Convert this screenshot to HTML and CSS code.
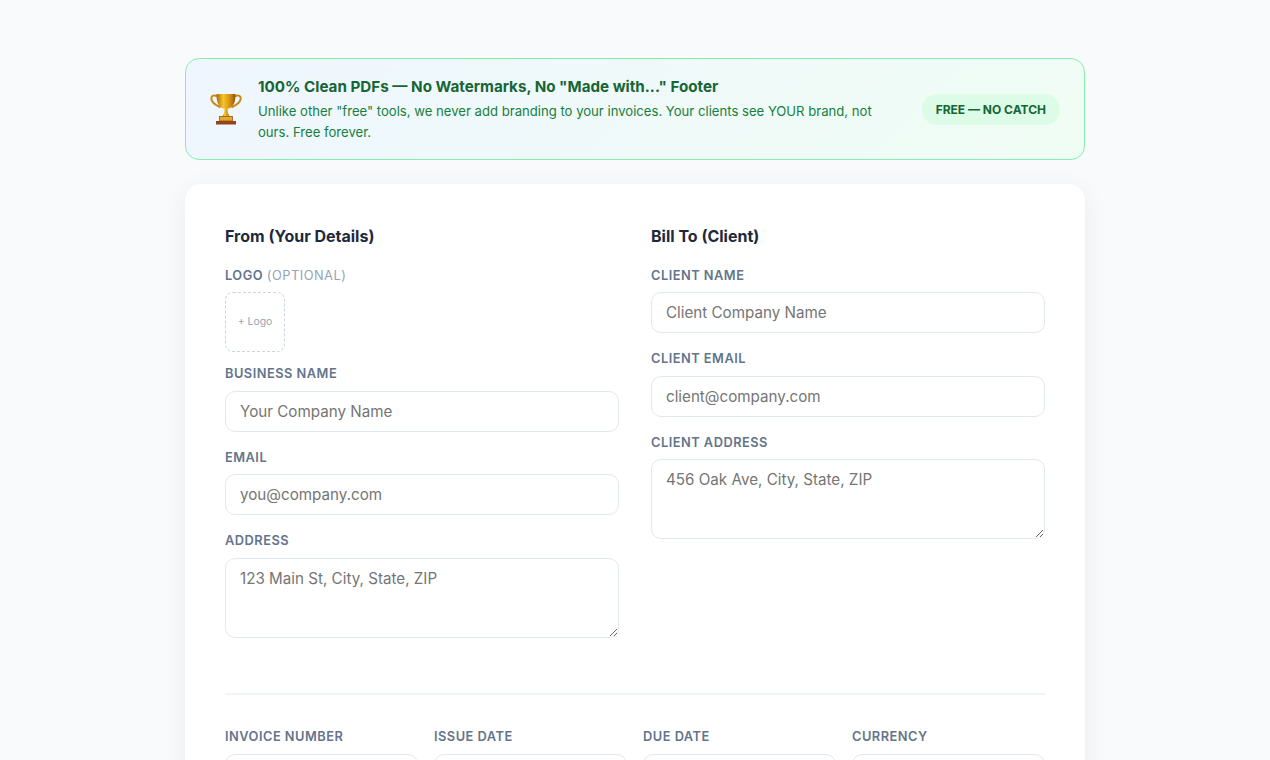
FILE: index.html
```html
<!DOCTYPE html>
<html lang="en">
<head>
<meta charset="utf-8">
<title>Invoice Generator</title>
<link rel="stylesheet" href="styles.css">
</head>
<body>
<main class="container">
  <section class="banner">
    <svg class="trophy" width="32" height="32" viewBox="0 0 32 32" aria-hidden="true">
      <defs>
        <linearGradient id="gold" x1="0" y1="0" x2="1" y2="0">
          <stop offset="0" stop-color="#a9690a"/>
          <stop offset="0.35" stop-color="#f6c52f"/>
          <stop offset="0.7" stop-color="#d8920f"/>
          <stop offset="1" stop-color="#8c5307"/>
        </linearGradient>
      </defs>
      <path d="M7.500 3.500C4 1.500 1.300 2.500 1.300 5.500C1.300 10 6 12 10.500 14.500" fill="none" stroke="#c98a14" stroke-width="2"/>
      <path d="M24.500 3.500C28 1.500 30.700 2.500 30.700 5.500C30.700 10 26 12 21.500 14.500" fill="none" stroke="#c98a14" stroke-width="2"/>
      <path d="M6.500 1H25.500C25.500 9 24 13 19 15.500H13C8 13 6.500 9 6.500 1Z" fill="url(#gold)"/>
      <path d="M14.500 15H17.500C17.500 20 18.500 22 20.500 24H11.500C13.500 22 14.500 20 14.500 15Z" fill="url(#gold)"/>
      <rect x="9.500" y="23.500" width="13" height="4.500" fill="#e2a92c" stroke="#9a5a1c" stroke-width="0.8"/>
      <rect x="6" y="28" width="20" height="3.500" fill="#94431a"/>
    </svg>
    <div class="banner-text">
      <h2 class="banner-title">100% Clean PDFs — No Watermarks, No "Made with..." Footer</h2>
      <p class="banner-desc">Unlike other "free" tools, we never add branding to your invoices. Your clients see YOUR brand, not ours. Free forever.</p>
    </div>
    <span class="badge">FREE — NO CATCH</span>
  </section>

  <section class="card">
    <div class="parties">
      <div class="party">
        <h3 class="party-title">From (Your Details)</h3>
        <div class="field field-logo">
          <label class="label">Logo <span class="optional">(optional)</span></label>
          <div class="logo-box">+ Logo</div>
        </div>
        <div class="field">
          <label class="label" for="biz">Business Name</label>
          <input class="input" id="biz" placeholder="Your Company Name">
        </div>
        <div class="field">
          <label class="label" for="email">Email</label>
          <input class="input" id="email" placeholder="you@company.com">
        </div>
        <div class="field">
          <label class="label" for="addr">Address</label>
          <textarea class="input area" id="addr" placeholder="123 Main St, City, State, ZIP"></textarea>
        </div>
      </div>
      <div class="party">
        <h3 class="party-title">Bill To (Client)</h3>
        <div class="field">
          <label class="label" for="cname">Client Name</label>
          <input class="input" id="cname" placeholder="Client Company Name">
        </div>
        <div class="field">
          <label class="label" for="cemail">Client Email</label>
          <input class="input" id="cemail" placeholder="client@company.com">
        </div>
        <div class="field">
          <label class="label" for="caddr">Client Address</label>
          <textarea class="input area" id="caddr" placeholder="456 Oak Ave, City, State, ZIP"></textarea>
        </div>
      </div>
    </div>
    <hr class="divider">
    <div class="meta">
      <div class="field">
        <label class="label" for="num">Invoice Number</label>
        <input class="input" id="num">
      </div>
      <div class="field">
        <label class="label" for="issue">Issue Date</label>
        <input class="input" id="issue">
      </div>
      <div class="field">
        <label class="label" for="due">Due Date</label>
        <input class="input" id="due">
      </div>
      <div class="field">
        <label class="label" for="cur">Currency</label>
        <input class="input" id="cur">
      </div>
    </div>
  </section>
</main>
</body>
</html>
```
FILE: styles.css
```css
* { box-sizing: border-box; }
html, body { margin: 0; padding: 0; }
html { height: 760px; overflow: hidden; }
body {
  background: #f8fafc;
  font-family: "Inter", "Liberation Sans", sans-serif;
  color: #1e293b;
  line-height: 1.6;
}
.container {
  width: 900px;
  margin: 0 auto;
  padding-top: 58px;
}
.banner {
  display: flex;
  align-items: center;
  gap: 16px;
  padding: 16px 24px;
  margin-bottom: 24px;
  border: 1px solid #86efac;
  border-radius: 14px;
  background: linear-gradient(135deg, #eff6ff 0%, #f0fdf4 100%);
}
.trophy { flex: none; }
.banner-text {
  flex: 1;
  min-width: 0;
  padding-right: 16px;
}
.banner-title {
  margin: 0 0 2px;
  font-size: 15.2px;
  font-weight: 700;
  line-height: 1.6;
  color: #166534;
}
.banner-desc {
  margin: 0;
  font-size: 13.12px;
  line-height: 1.6;
  color: #15803d;
}
.badge {
  flex: none;
  padding: 8px 14px;
  border-radius: 20px;
  background: #dcfce7;
  color: #166534;
  font-size: 12px;
  font-weight: 700;
  line-height: 15px;
  white-space: nowrap;
}
.card {
  padding: 40px;
  border-radius: 16px;
  background: #fff;
  box-shadow: 0 4px 24px rgba(0, 0, 0, 0.06);
}
.parties {
  display: grid;
  grid-template-columns: 1fr 1fr;
  gap: 32px;
}
.party-title {
  margin: 0 0 16px;
  font-size: 16px;
  font-weight: 700;
  line-height: 1.6;
  color: #1e293b;
}
.field { margin-bottom: 16px; }
.field-logo { margin-bottom: 12px; }
.label {
  display: block;
  margin-bottom: 6px;
  font-size: 12.8px;
  font-weight: 600;
  line-height: 1.6;
  letter-spacing: 0.5px;
  text-transform: uppercase;
  color: #64748b;
}
.optional {
  font-weight: 400;
  color: #94a3b8;
}
.logo-box {
  display: flex;
  align-items: center;
  justify-content: center;
  width: 60px;
  height: 60px;
  padding-bottom: 1px;
  border: 1px dashed #cbd5e1;
  border-radius: 8px;
  font-size: 10.4px;
  color: #94a3b8;
}
.input {
  display: block;
  width: 100%;
  height: 41px;
  padding: 10px 14px;
  border: 1px solid #e2e8f0;
  border-radius: 10px;
  background: #fff;
  font-family: inherit;
  font-size: 15.2px;
  line-height: 19px;
  color: #1e293b;
  outline: none;
}
.area {
  height: 80px;
  resize: vertical;
}
.divider {
  margin: 39.5px 0 32px;
  border: 0;
  border-top: 2px solid #f1f5f9;
}
.meta {
  display: grid;
  grid-template-columns: repeat(4, 1fr);
  gap: 16px;
}
```
